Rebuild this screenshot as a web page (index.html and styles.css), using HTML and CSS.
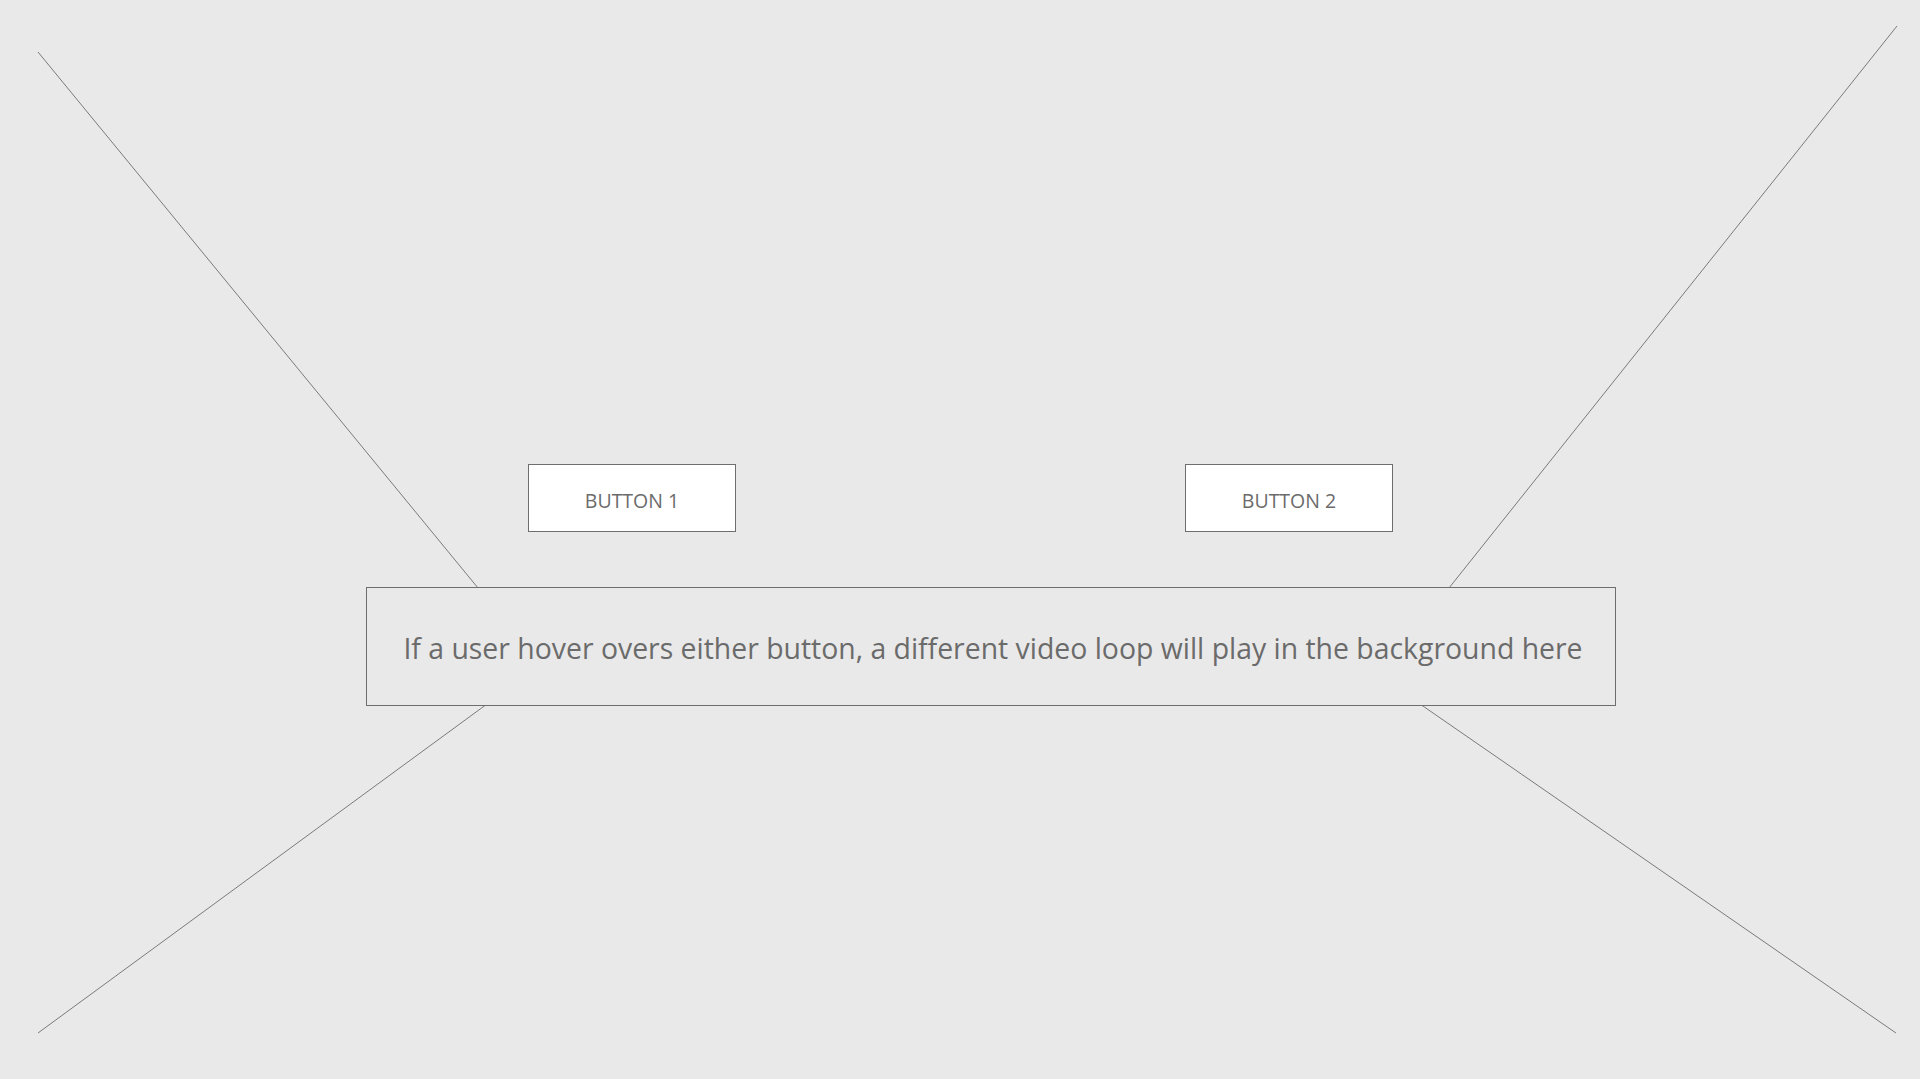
FILE: index.html
```html
<!DOCTYPE html>
<html lang="en">
<head>
<meta charset="utf-8">
<title>Video hover wireframe</title>
<link rel="stylesheet" href="styles.css">
</head>
<body>
<div class="stage">
  <svg class="backdrop" viewBox="0 0 1920 1079" width="1920" height="1079" aria-hidden="true">
    <line x1="38" y1="52" x2="478" y2="588"/>
    <line x1="1897" y1="26" x2="1449" y2="588"/>
    <line x1="38" y1="1033" x2="487" y2="704"/>
    <line x1="1896" y1="1033" x2="1420" y2="704"/>
  </svg>
  <div class="content">
    <div class="buttons">
      <button class="btn">BUTTON 1</button>
      <button class="btn">BUTTON 2</button>
    </div>
    <div class="caption">If a user hover overs either button, a different video loop will play in the background here</div>
  </div>
</div>
</body>
</html>
```
FILE: styles.css
```css
html, body {
  margin: 0;
  padding: 0;
  background: #e9e9e9;
}
body {
  font-family: "Open Sans", "Noto Sans", sans-serif;
  color: #6b6b6b;
}
.stage {
  position: relative;
  width: 1920px;
  height: 1079px;
  overflow: hidden;
}
.backdrop {
  position: absolute;
  left: 0;
  top: 0;
}
.backdrop line {
  stroke: #7a7a7a;
  stroke-width: 1;
}
.content {
  position: relative;
  display: flex;
  flex-direction: column;
  padding-top: 464px;
}
.buttons {
  display: flex;
  justify-content: center;
  gap: 449px;
  padding-left: 1px;
}
.btn {
  box-sizing: border-box;
  width: 208px;
  height: 68px;
  background: #ffffff;
  border: 1px solid #6e6e6e;
  border-radius: 0;
  font-family: "Open Sans", "Noto Sans", sans-serif;
  font-size: 19.5px;
  color: #6b6b6b;
  padding: 4px 0 0;
  margin: 0;
}
.caption {
  box-sizing: border-box;
  margin-top: 55px;
  margin-left: 366px;
  width: 1250px;
  height: 119px;
  border: 1px solid #6e6e6e;
  background: #e9e9e9;
  display: flex;
  align-items: center;
  justify-content: center;
  font-size: 28.4px;
  padding-top: 2px;
  padding-left: 4px;
}
```
